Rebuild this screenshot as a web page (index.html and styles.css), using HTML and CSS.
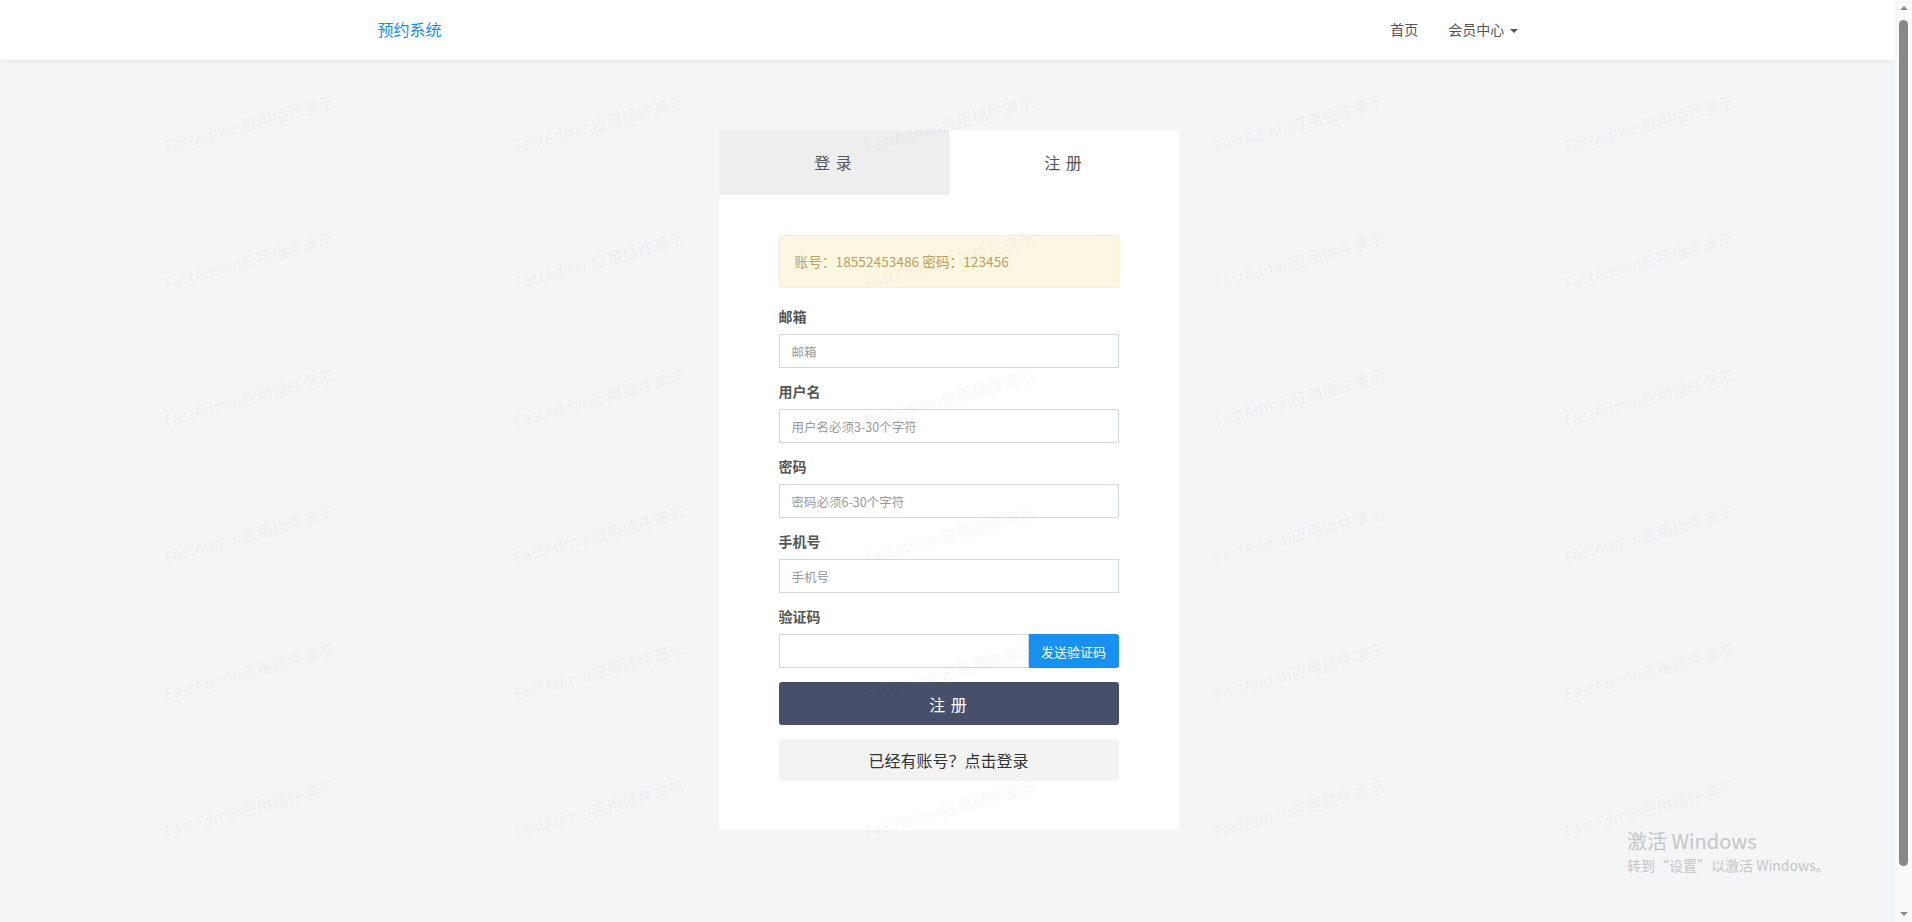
FILE: index.html
```html
<!DOCTYPE html>
<html>
	<head>
		<meta charset="UTF-8">
		<title>预约系统 - 注册</title>
		<link rel="stylesheet" href="styles.css">
	</head>
	<body>
		<div class="frame">
			<div class="page">
				<div class="navbar">
					<div class="container">
						<a class="brand" href="#">预约系统</a>
						<ul class="nav">
							<li><a href="#">首页</a></li>
							<li><a href="#">会员中心 <span class="caret"></span></a></li>
						</ul>
					</div>
				</div>

				<div class="main">
					<div class="panel">
						<div class="tabs">
							<a class="tab" href="#">登 录</a>
							<a class="tab active" href="#">注 册</a>
						</div>
						<form class="panel-body" name="register" onsubmit="return false;">
							<div class="alert">账号：18552453486 密码：123456</div>

							<div class="group">
								<label for="email">邮箱</label>
								<input type="text" id="email" placeholder="邮箱">
							</div>
							<div class="group">
								<label for="username">用户名</label>
								<input type="text" id="username" placeholder="用户名必须3-30个字符">
							</div>
							<div class="group">
								<label for="password">密码</label>
								<input type="password" id="password" placeholder="密码必须6-30个字符">
							</div>
							<div class="group">
								<label for="mobile">手机号</label>
								<input type="text" id="mobile" placeholder="手机号">
							</div>
							<div class="group">
								<label for="captcha">验证码</label>
								<div class="input-group">
									<input type="text" id="captcha">
									<button type="button" class="btn-send">发送验证码</button>
								</div>
							</div>

							<button type="submit" class="btn-submit">注 册</button>
							<a class="btn-login" href="#">已经有账号？点击登录</a>
						</form>
					</div>
				</div>

				<div class="watermark">
					<span>FastAdmin应用插件演示</span><span>FastAdmin应用插件演示</span><span>FastAdmin应用插件演示</span><span>FastAdmin应用插件演示</span><span>FastAdmin应用插件演示</span>
					<span>FastAdmin应用插件演示</span><span>FastAdmin应用插件演示</span><span>FastAdmin应用插件演示</span><span>FastAdmin应用插件演示</span><span>FastAdmin应用插件演示</span>
					<span>FastAdmin应用插件演示</span><span>FastAdmin应用插件演示</span><span>FastAdmin应用插件演示</span><span>FastAdmin应用插件演示</span><span>FastAdmin应用插件演示</span>
					<span>FastAdmin应用插件演示</span><span>FastAdmin应用插件演示</span><span>FastAdmin应用插件演示</span><span>FastAdmin应用插件演示</span><span>FastAdmin应用插件演示</span>
					<span>FastAdmin应用插件演示</span><span>FastAdmin应用插件演示</span><span>FastAdmin应用插件演示</span><span>FastAdmin应用插件演示</span><span>FastAdmin应用插件演示</span>
					<span>FastAdmin应用插件演示</span><span>FastAdmin应用插件演示</span><span>FastAdmin应用插件演示</span><span>FastAdmin应用插件演示</span><span>FastAdmin应用插件演示</span>
				</div>

				<div class="activate">
					<div class="activate-title">激活 Windows</div>
					<div class="activate-sub">转到“设置”以激活 Windows。</div>
				</div>
			</div>

			<div class="scrollbar">
				<span class="arrow up"></span>
				<span class="thumb"></span>
				<span class="arrow down"></span>
			</div>
		</div>
	</body>
</html>
```

FILE: styles.css
```css
html, body {
	margin : 0; padding : 0;
	height : 100%;
	overflow : hidden;
}
body {
	font-family : "Noto Sans CJK SC", "Noto Sans", sans-serif;
	font-size : 14px;
	color : #333;
	background : #f4f5f7;
}
a {
	text-decoration : none;
}
.frame {
	display : flex;
	height : 100%;
}
.page {
	position : relative;
	flex : 1;
	min-width : 0;
}

/* navbar */
.navbar {
	height : 60px;
	background : #fff;
	box-shadow : 0 1px 6px rgba(0, 0, 0, .07);
}
.container {
	width : 1170px;
	height : 100%;
	margin : 0 auto;
	padding : 0 15px;
	box-sizing : border-box;
	display : flex;
	align-items : center;
	justify-content : space-between;
}
.brand {
	color : #1a8cf0;
	font-size : 16px;
	line-height : 20px;
	margin-top : -2px;
}
.nav {
	display : flex;
	margin : 0 -15px 0 0; padding : 0;
	list-style-type : none;
}
.nav a {
	display : block;
	padding : 0 15px;
	color : #555;
	font-size : 14px;
	line-height : 20px;
	margin-top : -2px;
}
.caret {
	display : inline-block;
	width : 0; height : 0;
	margin-left : 2px;
	vertical-align : middle;
	border-top : 4px solid #555;
	border-left : 4px solid transparent;
	border-right : 4px solid transparent;
}

/* panel */
.main {
	padding-top : 70px;
	display : flex;
	justify-content : center;
}
.panel {
	width : 460px;
	background : #fff;
	margin-left : 2px;
}
.tabs {
	display : flex;
}
.tab {
	flex : 1;
	height : 65px;
	line-height : 65px;
	text-align : center;
	font-size : 16px;
	color : #555;
	background : #eee;
	letter-spacing : 1px;
}
.tab.active {
	background : #fff;
}
.panel-body {
	display : flex;
	flex-direction : column;
	margin : 0;
	padding : 40px 60px 49px;
}
.alert {
	height : 51px;
	line-height : 51px;
	padding : 0 15px;
	border : 1px solid #f9eec6;
	border-radius : 3px;
	background : #fcf7e3;
	color : #c39f5d;
	font-size : 13.7px;
	margin-bottom : 20px;
}
.group {
	display : flex;
	flex-direction : column;
	margin-bottom : 15px;
}
.group:last-of-type {
	margin-bottom : 0;
}
.group label {
	font-weight : bold;
	color : #555;
	font-size : 14px;
	line-height : 17px;
	margin-bottom : 9px;
}
.group input {
	height : 34px;
	box-sizing : border-box;
	border : 1px solid #d2d6de;
	padding : 0 12px;
	font-family : inherit;
	font-size : 12.5px;
	color : #555;
	outline : none;
	border-radius : 0;
}
.group input::placeholder {
	color : #999;
}
.input-group {
	display : flex;
}
.input-group input {
	flex : 1;
	min-width : 0;
}
.btn-send {
	width : 90px;
	height : 34px;
	border : none;
	border-radius : 0 3px 3px 0;
	background : #1890f0;
	color : #fff;
	font-family : inherit;
	font-size : 13px;
	padding : 0;
}
.btn-submit {
	margin-top : 14px;
	height : 43px;
	border : none;
	border-radius : 3px;
	background : #474f6b;
	color : #fff;
	font-family : inherit;
	font-size : 16px;
	letter-spacing : 1px;
}
.btn-login {
	margin-top : 14px;
	height : 42px;
	line-height : 42px;
	border-radius : 3px;
	background : #f3f3f3;
	color : #333;
	font-size : 16px;
	text-align : center;
}

/* watermark over the page */
.watermark {
	position : absolute;
	left : 74px; top : 54px;
	display : grid;
	grid-template-columns : repeat(5, 350px);
	grid-auto-rows : 137px;
	pointer-events : none;
}
.watermark span {
	display : flex;
	align-items : center;
	justify-content : center;
	transform : rotate(-15deg);
	font-family : "Open Sans", "Noto Sans CJK SC", sans-serif;
	font-size : 16px;
	color : rgba(0, 0, 0, .055);
	white-space : nowrap;
}

.activate {
	position : absolute;
	left : 1627px; top : 827px;
	color : #c4c5c7;
	pointer-events : none;
}
.activate-title {
	font-size : 20px;
	line-height : 28px;
}
.activate-sub {
	font-size : 14px;
	line-height : 20px;
}

/* fake scrollbar */
.scrollbar {
	width : 17px;
	background : #fafafa;
	display : flex;
	flex-direction : column;
	align-items : center;
}
.thumb {
	flex : 1;
	width : 9px;
	margin : 2px 0 46px;
	border-radius : 5px;
	background : #888;
}
.arrow {
	width : 0; height : 0;
	border-left : 4px solid transparent;
	border-right : 4px solid transparent;
}
.arrow.up {
	border-bottom : 4px solid #888;
	margin : 6px 0 8px;
}
.arrow.down {
	border-top : 4px solid #888;
	margin : 0 0 6px;
}
```
